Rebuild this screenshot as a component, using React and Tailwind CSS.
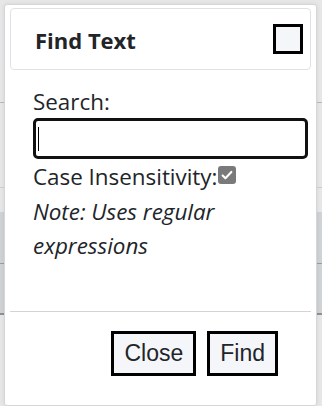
import React, { useState } from 'react';

const FindTextDialog = () => {
  const [query, setQuery] = useState('');
  const [caseInsensitive, setCaseInsensitive] = useState(true);

  return (
    <div className="w-[313px] h-[402px] bg-white border border-[#d6d6d6] rounded-[3px] flex flex-col overflow-hidden shadow-[0_0_4px_rgba(0,0,0,0.08)]">
      {/* Header */}
      <div className="mx-[5px] mt-[3px] h-[62px] border border-[#dee2e6] rounded-[4px] flex items-center justify-between pl-[24px] pr-[7px]">
        <h2 className="text-[22px] font-bold text-[#212529] leading-none pt-[2px]">Find Text</h2>
        <button className="w-[30px] h-[30px] border-[3px] border-black bg-[#f5f6f9]" aria-label="Close" />
      </div>

      {/* Body */}
      <div className="flex-1 px-[28px] pt-[15px] text-[22.4px] leading-[33px] text-[#212529]">
        <label className="block">Search:</label>
        <div className="w-[275px] h-[41px] border-[3px] border-[#111] rounded-[5px] flex items-center pl-[2px]">
          <span className="w-px h-[24px] bg-black" />
          <input
            value={query}
            onChange={(e) => setQuery(e.target.value)}
            className="flex-1 h-full outline-none bg-transparent text-[20px] px-1"
          />
        </div>
        <div className="flex items-center mt-[1px]">
          <span>Case Insensitivity:</span>
          <button
            onClick={() => setCaseInsensitive(!caseInsensitive)}
            className="w-[18px] h-[18px] ml-[1px] rounded-[3px] bg-[#7a7a7a] flex items-center justify-center -mt-[3px]"
          >
            {caseInsensitive && (
              <svg width="14" height="14" viewBox="0 0 16 16" fill="none">
                <path d="M3 8.5l3.2 3.2L13 4.5" stroke="#fff" strokeWidth="2.4" strokeLinecap="round" strokeLinejoin="round" />
              </svg>
            )}
          </button>
        </div>
        <p className="italic mt-[2px] leading-[34px]">Note: Uses regular expressions</p>
      </div>

      {/* Footer */}
      <div className="mx-[5px] border-t border-[#d4d4d4] h-[94px] flex items-start justify-end pt-[19px] pr-[33px] gap-[11px] font-['Liberation_Sans',Arial,sans-serif]">
        <button className="h-[45px] px-[10px] border-[3px] border-black bg-[#f5f6f9] text-[23px] text-[#212529]">Close</button>
        <button className="h-[45px] px-[10px] border-[3px] border-black bg-[#f5f6f9] text-[23px] text-[#212529]">Find</button>
      </div>
    </div>
  );
};

const App = () => {
  return (
    <div className="relative w-[322px] h-[406px] overflow-hidden bg-[#e7e7e7] font-['Open_Sans',sans-serif]">
      {/* dimmed page behind the dialog */}
      <div className="absolute inset-0 flex flex-col">
        <div className="h-[102px]" />
        <div className="h-px bg-[#b9b9b9]" />
        <div className="h-[84px]" />
        <div className="h-px bg-[#cfcfcf]" />
        <div className="h-[24px]" />
        <div className="h-[51px] bg-[#d0d3d6]" />
        <div className="h-px bg-[#9a9c9e]" />
        <div className="h-[49px] bg-[#d0d3d6]" />
        <div className="h-[2px] bg-[#8e9092]" />
      </div>
      <div className="relative pt-[4px] pl-[4px]">
        <FindTextDialog />
      </div>
    </div>
  );
};

export default App;
